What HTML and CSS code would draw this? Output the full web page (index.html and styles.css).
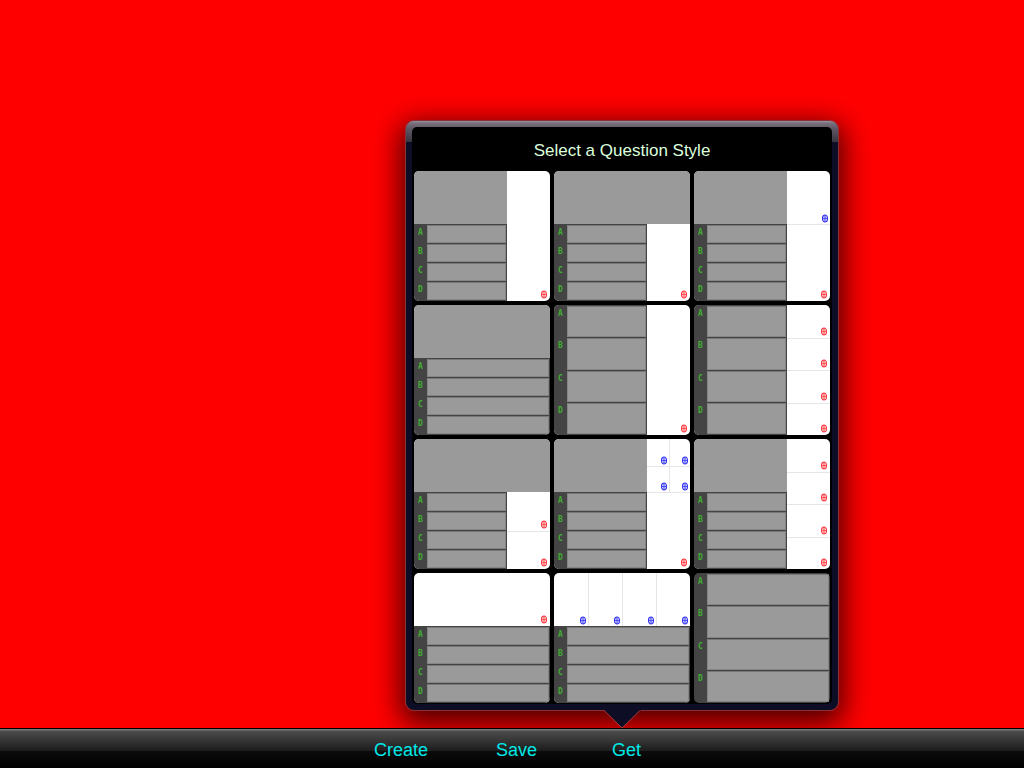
FILE: index.html
```html
<!DOCTYPE html>
<html lang="en">
<head>
<meta charset="utf-8">
<title>Question Style</title>
<link rel="stylesheet" href="styles.css">
</head>
<body>
<svg class="defs" aria-hidden="true">
  <symbol id="target" viewBox="0 0 6 9">
    <ellipse cx="3" cy="4.500" rx="2.500" ry="3.500" fill="currentColor" fill-opacity=".1" stroke="currentColor" stroke-width="1.2"/>
    <path d="M3 1v7" stroke="currentColor" stroke-width="1" fill="none"/>
    <path d="M1 4.500h4" stroke="currentColor" stroke-width=".8" fill="none"/>
  </symbol>
</svg>
<main class="stage">
  <section class="popover" aria-labelledby="popover-title">
    <div class="panel">
      <h1 class="title" id="popover-title">Select a Question Style</h1>
      <div class="styles">
        <button class="tile" aria-label="Question with tall media">
          <span class="question"></span>
          <span class="media tall"><span class="slot"><svg><use href="#target"/></svg></span></span>
          <span class="answers"><span>A</span><span>B</span><span>C</span><span>D</span></span>
        </button>
        <button class="tile" aria-label="Wide question with answer media">
          <span class="question wide"></span>
          <span class="answers"><span>A</span><span>B</span><span>C</span><span>D</span></span>
          <span class="media"><span class="slot"><svg><use href="#target"/></svg></span></span>
        </button>
        <button class="tile" aria-label="Question media and answer media">
          <span class="question"></span>
          <span class="media blue"><span class="slot"><svg><use href="#target"/></svg></span></span>
          <span class="answers"><span>A</span><span>B</span><span>C</span><span>D</span></span>
          <span class="media ruled"><span class="slot"><svg><use href="#target"/></svg></span></span>
        </button>
        <button class="tile" aria-label="Wide question and answers">
          <span class="question wide"></span>
          <span class="answers wide"><span>A</span><span>B</span><span>C</span><span>D</span></span>
        </button>
        <button class="tile" aria-label="Tall answers with media">
          <span class="answers tall"><span>A</span><span>B</span><span>C</span><span>D</span></span>
          <span class="media tall"><span class="slot"><svg><use href="#target"/></svg></span></span>
        </button>
        <button class="tile" aria-label="Tall answers with four media">
          <span class="answers tall"><span>A</span><span>B</span><span>C</span><span>D</span></span>
          <span class="media tall"><span class="slot"><svg><use href="#target"/></svg></span><span class="slot"><svg><use href="#target"/></svg></span><span class="slot"><svg><use href="#target"/></svg></span><span class="slot"><svg><use href="#target"/></svg></span></span>
        </button>
        <button class="tile" aria-label="Wide question with two media">
          <span class="question wide"></span>
          <span class="answers"><span>A</span><span>B</span><span>C</span><span>D</span></span>
          <span class="media"><span class="slot"><svg><use href="#target"/></svg></span><span class="slot"><svg><use href="#target"/></svg></span></span>
        </button>
        <button class="tile" aria-label="Four question media and answer media">
          <span class="question"></span>
          <span class="media blue quad"><span class="slot"><svg><use href="#target"/></svg></span><span class="slot"><svg><use href="#target"/></svg></span><span class="slot"><svg><use href="#target"/></svg></span><span class="slot"><svg><use href="#target"/></svg></span></span>
          <span class="answers"><span>A</span><span>B</span><span>C</span><span>D</span></span>
          <span class="media ruled"><span class="slot"><svg><use href="#target"/></svg></span></span>
        </button>
        <button class="tile" aria-label="Question with four media">
          <span class="question"></span>
          <span class="media tall"><span class="slot"><svg><use href="#target"/></svg></span><span class="slot"><svg><use href="#target"/></svg></span><span class="slot"><svg><use href="#target"/></svg></span><span class="slot"><svg><use href="#target"/></svg></span></span>
          <span class="answers"><span>A</span><span>B</span><span>C</span><span>D</span></span>
        </button>
        <button class="tile" aria-label="Wide media and answers">
          <span class="media wide"><span class="slot"><svg><use href="#target"/></svg></span></span>
          <span class="answers wide"><span>A</span><span>B</span><span>C</span><span>D</span></span>
        </button>
        <button class="tile" aria-label="Four media across and answers">
          <span class="media blue wide row"><span class="slot"><svg><use href="#target"/></svg></span><span class="slot"><svg><use href="#target"/></svg></span><span class="slot"><svg><use href="#target"/></svg></span><span class="slot"><svg><use href="#target"/></svg></span></span>
          <span class="answers wide"><span>A</span><span>B</span><span>C</span><span>D</span></span>
        </button>
        <button class="tile" aria-label="Answers only">
          <span class="answers wide tall"><span>A</span><span>B</span><span>C</span><span>D</span></span>
        </button>
      </div>
    </div>
    <svg class="arrow" viewBox="0 0 38 20" aria-hidden="true"><path d="M0 0H38V1L19 19 1 1Z" fill="#0d0d26"/><path d="M1 1.500 19 19 37 1.500" fill="none" stroke="#a83a3a"/></svg>
  </section>
</main>
<nav class="toolbar" aria-label="Actions">
  <button>Create</button>
  <button>Save</button>
  <button>Get</button>
</nav>
</body>
</html>
```

FILE: styles.css
```css
*, *::after { box-sizing: border-box; }

body {
  margin: 0;
  min-height: 100vh;
  display: flex;
  flex-direction: column;
  background: #f00;
  font-family: "Liberation Sans", Arial, sans-serif;
}

button {
  margin: 0;
  padding: 0;
  border: 0;
  background: none;
  font: inherit;
}

.defs { position: absolute; width: 0; height: 0; }

.stage { flex: 1; position: relative; min-height: 620px; }

/* Popover floats over the stage, its arrow pointing at the Get button */
.popover {
  position: absolute;
  right: 185px;
  bottom: 17px;
  width: 434px;
  padding: 6px;
  border: 1px solid #8b3038;
  border-radius: 9px;
  background: linear-gradient(#9a929e 0, #7a707e 2px, #625967 7px, #38343f 21px, #0d0d26 21px);
  box-shadow: 0 8px 28px 4px rgba(0, 0, 0, .72);
}

.panel {
  padding: 0 2px 1px;
  border-radius: 5px;
  background: #000;
}

.title {
  margin: 0;
  height: 44px;
  font-size: 17px;
  font-weight: 400;
  line-height: 48px;
  text-align: center;
  color: #dcffdc;
}

.styles {
  display: grid;
  grid-template-columns: repeat(3, 1fr);
  gap: 4px;
}

.tile {
  height: 130px;
  display: grid;
  grid-template-columns: 1fr 43px;
  grid-template-rows: 53px 1fr;
  overflow: hidden;
  border-radius: 5px;
  background: #fff;
}

.question { background: #9a9a9a; }
.wide { grid-column: 1 / -1; }
.tall { grid-row: 1 / -1; }

.media.tall { grid-column: 2; }
.media.ruled { border-top: 1px solid #e6e6e6; }

.answers {
  display: flex;
  flex-direction: column;
  padding: 0 1px 1px 0;
  background: #444;
}

.answers span {
  flex: 1;
  display: flex;
  justify-content: space-between;
  font: 8px/15px "DejaVu Sans Mono", monospace;
  font-weight: 700;
  color: #41ad32;
  padding: 1px 0 0 4px;
}

.answers span::after {
  content: "";
  width: calc(100% - 9px);
  border: 1px solid #858585;
  border-top-color: #777;
  background: #9a9a9a;
}

.media {
  display: grid;
  grid-auto-rows: 1fr;
  color: #ff3a40;
}

.media.blue { color: #3434f5; }
.quad { grid-template-columns: 1fr 1fr; }
.row { grid-template-columns: repeat(4, 1fr); }

.slot {
  display: flex;
  justify-content: flex-end;
  align-items: flex-end;
  padding: 0 3px 2px 0;
}

.slot svg { display: block; width: 6px; height: 9px; }
.blue .slot { padding: 0 2px 1px 0; }
.slot + .slot { border-top: 1px solid #e6e6e6; }
.row .slot + .slot { border-top: 0; border-left: 1px solid #e6e6e6; }
.quad .slot:nth-child(2) { border-top: 0; }
.quad .slot:nth-child(even) { border-left: 1px solid #e6e6e6; }

.arrow {
  position: absolute;
  left: calc(50% - 19px);
  top: calc(100% - 1px);
  width: 38px;
  height: 20px;
}

.toolbar {
  position: relative;
  height: 40px;
  display: grid;
  grid-template-columns: 122px 116px auto;
  justify-content: center;
  padding: 3px 9px 0 0;
  border-top: 1px solid #000;
  background: linear-gradient(#777 0, #777 1px, #4c4c4c 2px, #1c1c1c 22px, #0b0b0b 22px, #000 100%);
}

.toolbar button {
  font-size: 18px;
  text-align: left;
  color: #00e8e8;
  cursor: pointer;
}
```
